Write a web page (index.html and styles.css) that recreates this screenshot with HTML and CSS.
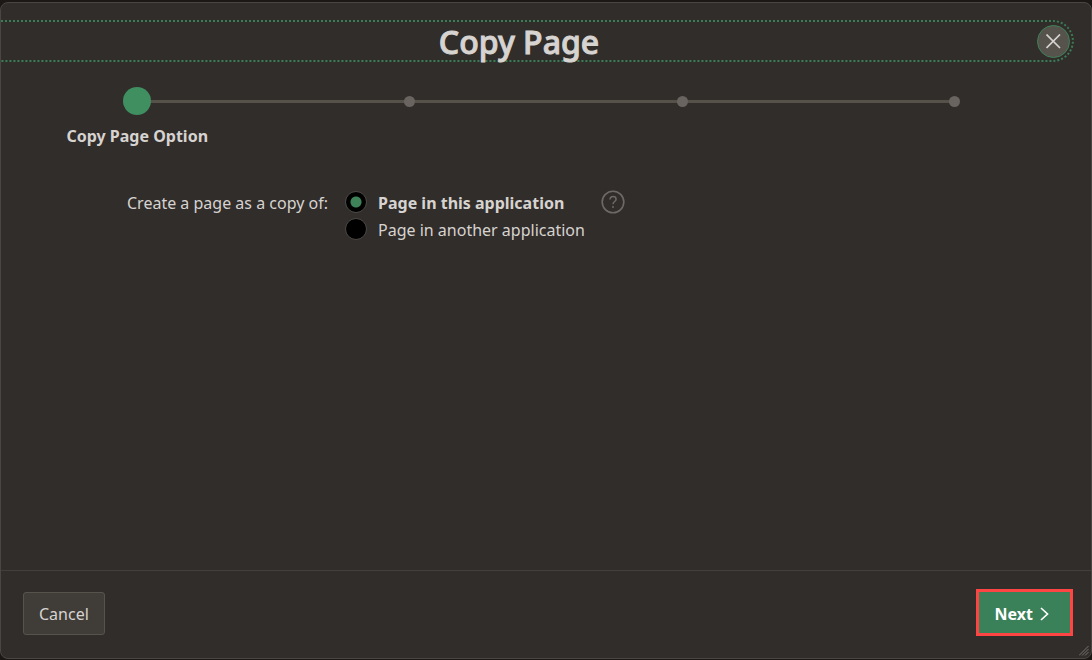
FILE: index.html
```html
<!DOCTYPE html>
<html lang="en">
<head>
<meta charset="utf-8">
<title>Copy Page</title>
<link rel="stylesheet" href="styles.css">
</head>
<body>
<form class="dialog" role="dialog" aria-labelledby="dialog-title">
  <header class="titlebar">
    <h1 class="title" id="dialog-title">Copy Page</h1>
    <button class="close" type="button" aria-label="Close">
      <svg viewBox="0 0 15 15" width="15" height="15" aria-hidden="true"><path d="M.5.5 14 14M14 .5.5 14" fill="none" stroke="currentColor" stroke-width="1.700"/></svg>
    </button>
  </header>
  <main class="content">
    <ol class="steps">
      <li class="step current" aria-current="step"><span class="marker"></span><span class="step-label">Copy Page Option</span></li>
      <li class="step"><span class="marker"></span></li>
      <li class="step"><span class="marker"></span></li>
      <li class="step"><span class="marker"></span></li>
    </ol>
    <div class="field" role="radiogroup" aria-labelledby="copy-label">
      <span class="field-label" id="copy-label">Create a page as a copy of:</span>
      <div class="options">
        <div class="option"><input class="radio" type="radio" name="copy" id="copy-this" checked><label class="option-label" for="copy-this">Page in this application</label></div>
        <div class="option"><input class="radio" type="radio" name="copy" id="copy-other"><label class="option-label" for="copy-other">Page in another application</label></div>
      </div>
      <button class="help" type="button" aria-label="Help">
        <svg viewBox="0 0 24 24" width="24" height="24" aria-hidden="true"><g fill="none" stroke="currentColor"><circle cx="12" cy="12" r="10.800" stroke-width="1.600"/><path d="M9 9.600C9 7.700 10.200 6.600 12 6.600S15.100 7.700 15.100 9.300C15.100 11.600 12 11.500 12 14.200" stroke-width="1.500"/></g><circle cx="12" cy="17" r="1" fill="currentColor"/></svg>
      </button>
    </div>
  </main>
  <footer class="footer">
    <button class="button" type="button">Cancel</button>
    <button class="button next" type="submit">Next
      <svg viewBox="0 0 10 14" width="10" height="14" aria-hidden="true"><path d="M1 1 7.500 7 1 13" fill="none" stroke="currentColor" stroke-width="1.700"/></svg>
    </button>
  </footer>
  <svg class="grip" viewBox="0 0 10 10" width="10" height="10" aria-hidden="true"><path d="M0 9.500 9.500 0M3 9.500 9.500 3M6 9.500 9.500 6" fill="none" stroke="currentColor"/></svg>
</form>
</body>
</html>
```
FILE: styles.css
```css
* {
  box-sizing: border-box;
}

body {
  display: flex;
  min-height: 100vh;
  margin: 0;
  padding: 2px 0 1px;
  background: #1c1816;
  color: #d6d3d0;
  font: 16px/24px "Noto Sans", "Open Sans", sans-serif;
}

button {
  font: inherit;
  color: inherit;
  cursor: pointer;
}

.dialog {
  position: relative;
  flex: 1;
  display: flex;
  flex-direction: column;
  background: #312d2a;
  border: 1px solid #4a4643;
  border-radius: 8px;
}

.titlebar {
  display: flex;
  align-items: center;
  height: 42px;
  margin: 17px 17px 0 0;
  padding-right: 2px;
  border: 2px dotted #3a7d56;
  border-left: 0;
  border-radius: 0 21px 21px 0;
}

.title {
  flex: 1;
  margin: 0;
  padding-top: 2px;
  text-align: center;
  font-size: 32px;
  font-weight: 500;
  line-height: 36px;
  -webkit-text-stroke: 1px currentColor;
}

.close {
  display: grid;
  place-items: center;
  width: 33px;
  height: 33px;
  padding: 0;
  background: #56524c;
  border: 1px solid #3f8259;
  border-radius: 50%;
}

.content {
  flex: 1;
}

.steps {
  display: grid;
  grid-template-columns: repeat(4, 1fr);
  margin: 25px 0 0;
  padding: 0;
  list-style: none;
}

.step {
  position: relative;
  display: flex;
  flex-direction: column;
  align-items: center;
  gap: 9px;
}

.step + .step::before {
  content: "";
  position: absolute;
  top: 13px;
  right: 50%;
  width: 100%;
  height: 3px;
  background: #56524a;
}

.marker {
  position: relative;
  z-index: 1;
  width: 11px;
  height: 11px;
  margin: 9px 0;
  background: #6a6460;
  border-radius: 50%;
}

.current .marker {
  width: 28px;
  height: 28px;
  margin: 0;
  background: #3f8f60;
}

.step-label {
  font-weight: 700;
}

.field {
  display: flex;
  align-items: flex-start;
  gap: 21px;
  margin-top: 40px;
  padding-left: 126px;
}

.field-label,
.option-label {
  padding-top: 3px;
  white-space: nowrap;
}

.field-label {
  width: 197px;
}

.options {
  width: 235px;
}

.option {
  display: flex;
  align-items: center;
  gap: 11px;
}

.radio {
  appearance: none;
  flex: none;
  width: 22px;
  height: 22px;
  margin: 0;
  background: #000;
  border: 1px solid #4c4845;
  border-radius: 50%;
}

.radio:checked {
  background: radial-gradient(circle, #3f8259 5px, #000 6px);
}

.radio:checked + .option-label {
  font-weight: 700;
}

.help {
  display: flex;
  margin-top: 2px;
  padding: 0;
  color: #6e6965;
  background: none;
  border: 0;
}

.footer {
  display: flex;
  justify-content: space-between;
  align-items: flex-start;
  padding: 21px 21px 23px 22px;
  border-top: 1px solid #43403c;
}

.button {
  display: flex;
  align-items: center;
  gap: 7px;
  height: 43px;
  padding: 1px 15px 0;
  background: #403c38;
  border: 1px solid #56524c;
  border-radius: 3px;
}

.next {
  height: 41px;
  padding: 3px 20px 0 16px;
  color: #fff;
  font-weight: 700;
  background: #3a8058;
  border: 0;
  border-radius: 0;
  outline: 3px solid #ff4444;
}

.grip {
  position: absolute;
  right: 2px;
  bottom: 2px;
  color: #77726e;
}
```
